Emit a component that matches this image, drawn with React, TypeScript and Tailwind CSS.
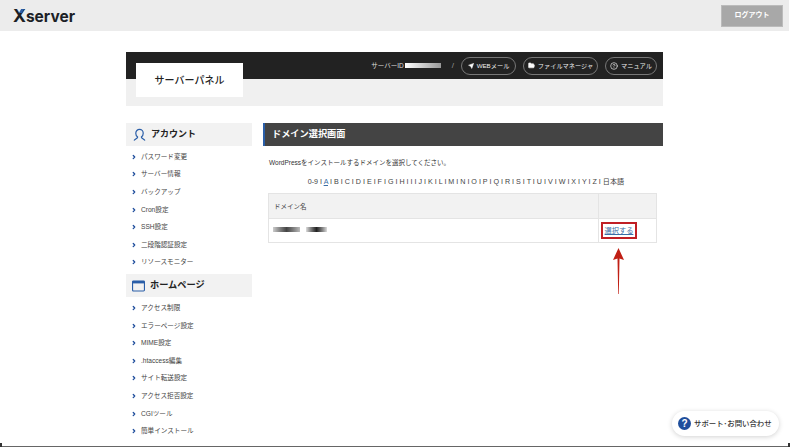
import { Send, FolderOpen, CircleHelp, ChevronRight } from "lucide-react";

const font = "font-['Liberation_Sans','Noto_Sans_CJK_JP',sans-serif]";

const accountLinks = ["パスワード変更", "サーバー情報", "バックアップ", "Cron設定", "SSH設定", "二段階認証設定", "リソースモニター"];
const homeLinks = ["アクセス制限", "エラーページ設定", "MIME設定", ".htaccess編集", "サイト転送設定", "アクセス拒否設定", "CGIツール", "簡単インストール"];
const letters = "BCDEFGHIJKLMNOPQRSTUVWXYZ".split("");

function SideLinks({ items }: { items: string[] }) {
  return (
    <ul className="flex flex-col">
      {items.map((label) => (
        <li key={label} className="flex h-[17.6px] items-center gap-[4px] pl-[5px] text-[6.6px] text-[#444]">
          <ChevronRight className="h-[6px] w-[6px] text-[#1f4e9c]" strokeWidth={5} />
          {label}
        </li>
      ))}
    </ul>
  );
}

function UserIcon() {
  return (
    <svg viewBox="0 0 14 14" className="h-[14px] w-[13px]" fill="none" stroke="#2a5ea8" strokeWidth="1.3">
      <path d="M5 9.2C3.4 8 3 6.8 3 5a4 4 0 0 1 8 0c0 1.8-.4 3-2 4.2 0 1.4 1.6 1.6 3.6 3.3M5 9.2c0 1.4-1.6 1.6-3.6 3.3" strokeLinecap="round" />
    </svg>
  );
}

function WindowIcon() {
  return (
    <svg viewBox="0 0 14 12" className="h-[12px] w-[13px]" fill="none">
      <rect x="0.6" y="0.6" width="12.8" height="10.8" rx="1" stroke="#2a5ea8" strokeWidth="1.2" />
      <rect x="0.6" y="0.6" width="12.8" height="2.6" fill="#2a5ea8" />
    </svg>
  );
}

function HeaderPill({ icon, label, width }: { icon: React.ReactNode; label: string; width: string }) {
  return (
    <span className={`flex h-[18px] items-center justify-center gap-[3px] rounded-full border border-[#777] text-[6.2px] whitespace-nowrap text-[#eee] ${width}`}>
      {icon}
      {label}
    </span>
  );
}

export default function App() {
  return (
    <div className={`relative h-[447px] w-[790px] overflow-hidden bg-white ${font}`}>
      <header className="flex h-[31px] w-[789px] items-center justify-between bg-[#ececec] pr-[7px] pl-[13px]">
        <span className="relative font-['Inter',sans-serif] text-[15.5px] leading-none font-bold text-[#1c1f26]">
          <span className="text-[17.5px]">X</span>server
          {/* blue flick on the X */}
          <span className="absolute top-[2px] left-[7px] h-[4px] w-[3px] -skew-x-[30deg] bg-[#2a5ea8]" />
        </span>
        <span className="flex h-[20px] w-[60px] items-center justify-center bg-[#a8a8a8] text-[7px] font-bold text-white shadow-[0_0_0_1px_#bbb]">
          ログアウト
        </span>
      </header>

      <div className="mt-[21px] ml-[126px] w-[537px]">
        <div className="relative h-[54px] bg-[#f0f0f0]">
          <div className="flex h-[27px] items-center justify-end bg-[#222] pr-[6px]">
            <span className="flex items-center text-[6.5px] text-[#ddd]">
              サーバーID
              <span className="ml-[1px] h-[5px] w-[36px] bg-gradient-to-r from-white via-[#ccc] to-[#999]" />
            </span>
            <span className="mr-[7px] ml-[11px] text-[8px] text-[#999]">/</span>
            <div className="flex gap-[7px]">
              <HeaderPill width="w-[55px]" label="WEBメール" icon={<Send className="h-[6px] w-[6px] fill-white" />} />
              <HeaderPill width="w-[75px]" label="ファイルマネージャ" icon={<FolderOpen className="h-[7px] w-[7px] fill-white" />} />
              <HeaderPill width="w-[52px]" label="マニュアル" icon={<CircleHelp className="h-[8px] w-[8px]" />} />
            </div>
          </div>
          <div className="absolute top-[11px] left-[10px] flex h-[34px] w-[107px] items-center justify-center bg-white text-[10px] font-medium text-[#222]">
            サーバーパネル
          </div>
        </div>

        <div className="mt-[17px] flex gap-[11px]">
          <aside className="w-[126px] shrink-0">
            <div className="flex h-[23px] items-center gap-[5px] bg-[#f2f2f2] pl-[7px] text-[9px] font-bold text-[#222]">
              <UserIcon />
              アカウント
            </div>
            <div className="pt-[2px] pb-[3px]">
              <SideLinks items={accountLinks} />
            </div>
            <div className="flex h-[23px] items-center gap-[5px] bg-[#f2f2f2] pl-[6px] text-[9.2px] font-bold text-[#222]">
              <WindowIcon />
              ホームページ
            </div>
            <div className="py-[2px]">
              <SideLinks items={homeLinks} />
            </div>
          </aside>

          <main className="min-w-0 flex-1">
            <h1 className="flex h-[23px] items-center border-l-[2px] border-[#2a5ea8] bg-[#444] pl-[7px] text-[9.2px] font-bold text-white">
              ドメイン選択画面
            </h1>
            <p className="mt-[12px] ml-[6px] text-[6.5px] text-[#333]">WordPressをインストールするドメインを選択してください。</p>
            <p className="mt-[9px] pl-[6px] text-center text-[7.15px] text-[#444]">
              0-9 I <span className="text-[#3b6ea5] underline">A</span>
              {letters.map((l) => ` I ${l}`).join("")} I 日本語
            </p>
            <table className="mt-[6px] ml-[5px] w-[389px] border-collapse text-[6.5px] text-[#444]">
              <tbody>
                <tr className="h-[25px] bg-[#f2f2f2]">
                  <td className="border border-[#e4e4e4] pl-[5px]">ドメイン名</td>
                  <td className="w-[58px] border border-[#e4e4e4]" />
                </tr>
                <tr className="h-[24px]">
                  <td className="border border-[#e4e4e4] pb-[3px] pl-[4px]">
                    <span className="flex items-center gap-[6px] blur-[0.4px]">
                      <span className="h-[5px] w-[27px] bg-gradient-to-r from-[#ccc] via-[#444] to-[#bbb]" />
                      <span className="h-[5px] w-[21px] bg-gradient-to-r from-[#ddd] via-[#222] to-[#ddd]" />
                    </span>
                  </td>
                  <td className="border border-[#e4e4e4] pl-[2px]">
                    <span className="inline-flex h-[17px] w-[36px] items-center justify-center border-2 border-[#c01f25] text-[7.2px] text-[#3b6ea5] underline">
                      選択する
                    </span>
                  </td>
                </tr>
              </tbody>
            </table>
          </main>
        </div>
      </div>

      <svg viewBox="0 0 11 46" className="absolute top-[248px] left-[613px] h-[46px] w-[11px]">
        <path d="M5.5 0 L11 12 L6.5 10.5 L5.8 46 L5.2 46 L4.5 10.5 L0 12 Z" fill="#c01f14" />
      </svg>

      <div className="absolute top-[411px] left-[672px] flex h-[25px] w-[107px] items-center gap-[3px] rounded-full bg-white pl-[6px] text-[7.4px] font-medium whitespace-nowrap text-[#333] shadow-[0_1px_5px_rgba(0,0,0,0.18)]">
        <span className="flex h-[13px] w-[13px] items-center justify-center rounded-full bg-[#1f4e9c] text-[10px] font-bold text-white">?</span>
        サポート･お問い合わせ
      </div>

      {/* window edge at the bottom of the capture */}
      <div className="absolute inset-x-0 bottom-0 h-[1px] bg-[#666]" />
      <div className="absolute bottom-0 left-0 h-[4px] w-[2px] bg-[#333]" />
      <div className="absolute right-0 bottom-0 h-[4px] w-[2px] bg-[#333]" />
    </div>
  );
}
